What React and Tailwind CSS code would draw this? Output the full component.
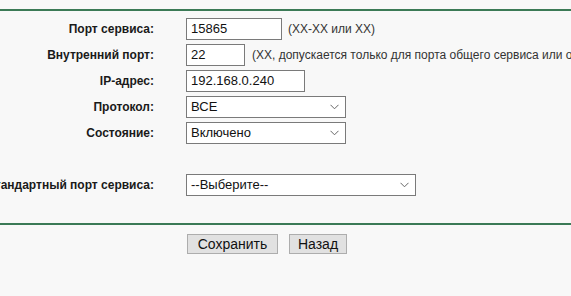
import React from "react";

const font = { fontFamily: '"Liberation Sans", Arial, sans-serif' };

function Chevron() {
  return (
    <svg className="pointer-events-none absolute right-[7px] top-1/2 -translate-y-1/2" width="9" height="6" viewBox="0 0 9 6">
      <path d="M0.5 0.8 L4.5 4.8 L8.5 0.8" fill="none" stroke="#666" strokeWidth="1" />
    </svg>
  );
}

function Select({ w, value }) {
  return (
    <div className={`relative h-[22px] ${w}`}>
      <div className="flex h-full w-full items-center border border-[#7a7a7a] bg-white pl-[4px] text-[13px] text-[#111]">
        {value}
      </div>
      <Chevron />
    </div>
  );
}

function Input({ w, value }) {
  return (
    <div className={`flex h-[22px] ${w} items-center border border-[#7a7a7a] bg-white pl-[4px] text-[13px] text-[#111]`}>
      {value}
    </div>
  );
}

function Row({ label, children }) {
  return (
    <div className="flex h-[26px] items-center">
      <div className="flex w-[154px] shrink-0 justify-end whitespace-nowrap text-[12px] font-bold text-[#1a1a1a]">
        {label}
      </div>
      <div className="ml-[32px] flex items-center whitespace-nowrap">{children}</div>
    </div>
  );
}

export default function App() {
  return (
    <div className="h-[296px] w-[571px] overflow-hidden bg-[#f8f8f8]" style={font}>
      <div className="h-[9px]" />
      <div className="border-t-2 border-[#3b7a56]" />
      <div className="pt-[5px]">
        <Row label="Порт сервиса:">
          <Input w="w-[96px]" value="15865" />
          <span className="ml-[6px] text-[12px] text-[#333]">(XX-XX или XX)</span>
        </Row>
        <Row label="Внутренний порт:">
          <Input w="w-[59px]" value="22" />
          <span className="ml-[7px] text-[12px] text-[#333]">
            (XX, допускается только для порта общего сервиса или оставьте пустым)
          </span>
        </Row>
        <Row label="IP-адрес:">
          <Input w="w-[119px]" value="192.168.0.240" />
        </Row>
        <Row label="Протокол:">
          <Select w="w-[160px]" value="ВСЕ" />
        </Row>
        <Row label="Состояние:">
          <Select w="w-[160px]" value="Включено" />
        </Row>
        <div className="h-[26px]" />
        <Row label="Стандартный порт сервиса:">
          <Select w="w-[230px]" value="--Выберите--" />
        </Row>
      </div>
      <div className="mt-[25px] border-t-2 border-[#3b7a56]" />
      <div className="mt-[9px] flex gap-[11px] pl-[187px]">
        <button className="h-[20px] w-[91px] border border-[#adadad] bg-[#e1e1e1] text-[14px] leading-none text-[#111]">
          Сохранить
        </button>
        <button className="h-[20px] w-[58px] border border-[#adadad] bg-[#e1e1e1] text-[14px] leading-none text-[#111]">
          Назад
        </button>
      </div>
    </div>
  );
}
